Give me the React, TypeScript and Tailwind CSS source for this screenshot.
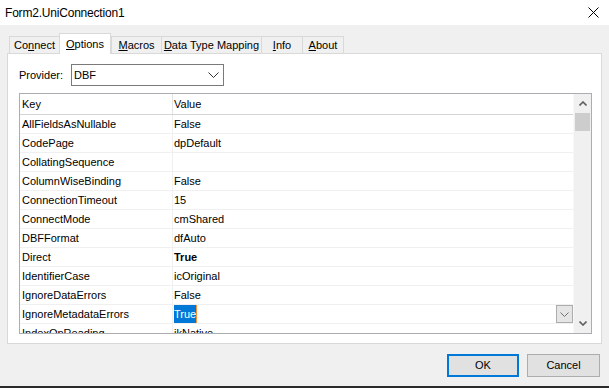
import React from "react";

type Row = { key: string; value: string; bold?: boolean; editing?: boolean };

const rows: Row[] = [
  { key: "AllFieldsAsNullable", value: "False" },
  { key: "CodePage", value: "dpDefault" },
  { key: "CollatingSequence", value: "" },
  { key: "ColumnWiseBinding", value: "False" },
  { key: "ConnectionTimeout", value: "15" },
  { key: "ConnectMode", value: "cmShared" },
  { key: "DBFFormat", value: "dfAuto" },
  { key: "Direct", value: "True", bold: true },
  { key: "IdentifierCase", value: "icOriginal" },
  { key: "IgnoreDataErrors", value: "False" },
  { key: "IgnoreMetadataErrors", value: "True", editing: true },
  { key: "IndexOnReading", value: "ikNative" },
];

// label split around the mnemonic letter
const tabs = [
  { pre: "Co", u: "n", post: "nect", w: "w-[50px]" },
  { pre: "", u: "O", post: "ptions", w: "w-[52px]", active: true },
  { pre: "", u: "M", post: "acros", w: "w-[50px]" },
  { pre: "", u: "D", post: "ata Type Mapping", w: "w-[100px]" },
  { pre: "", u: "I", post: "nfo", w: "w-[41px]" },
  { pre: "", u: "A", post: "bout", w: "w-[42px]" },
];

function Chevron({ className = "", small }: { className?: string; small?: boolean }) {
  if (small) {
    return (
      <svg width="9" height="5" viewBox="0 0 9 5" className={className}>
        <path d="M0.5 0.5 L4.5 4.5 L8.5 0.5" fill="none" stroke="currentColor" strokeWidth="1" />
      </svg>
    );
  }
  return (
    <svg width="11" height="6" viewBox="0 0 11 6" className={className}>
      <path d="M0.5 0.5 L5.5 5.5 L10.5 0.5" fill="none" stroke="currentColor" strokeWidth="1" />
    </svg>
  );
}

function ScrollArrow({ up }: { up?: boolean }) {
  return (
    <svg width="8" height="5" viewBox="0 0 8 5" className="text-[#606060]">
      <path
        d={up ? "M0.5 4.5 L4 1 L7.5 4.5" : "M0.5 0.5 L4 4 L7.5 0.5"}
        fill="none"
        stroke="currentColor"
        strokeWidth="1.6"
      />
    </svg>
  );
}

export default function App() {
  return (
    <div className="w-[609px] h-[388px] bg-[#f0f0f0] flex flex-col overflow-hidden font-['Liberation_Sans',Arial,sans-serif] text-[11px] text-black">
      {/* title bar */}
      <div className="h-[25px] bg-white flex items-center justify-between pl-[5px] pr-[10px]">
        <span className="text-[12px] tracking-[-0.2px]">Form2.UniConnection1</span>
        <svg width="11" height="11" viewBox="0 0 11 11">
          <path d="M0.5 0.5 L10.5 10.5 M10.5 0.5 L0.5 10.5" stroke="#000" strokeWidth="1" />
        </svg>
      </div>

      {/* tabs */}
      <div className="pt-[8px] px-[7px]">
        <div className="flex items-end h-[20px] pl-[2px]">
          {tabs.map((t, i) => (
            <div
              key={i}
              className={
                t.active
                  ? `${t.w} h-[21px] bg-white border border-b-0 border-[#d9d9d9] flex items-start justify-center pt-[2px] relative z-10 -mb-px`
                  : `${t.w} h-[17px] border-t border-l border-[#d9d9d9] ${i === tabs.length - 1 ? "border-r" : ""} flex items-center justify-center`
              }
            >
              <span>
                {t.pre}
                <span className="underline underline-offset-1">{t.u}</span>
                {t.post}
              </span>
            </div>
          ))}
        </div>

        {/* page */}
        <div className="h-[291px] bg-white border border-[#d9d9d9] flex flex-col pl-[11px] pr-[9px]">
          <div className="flex items-center mt-[10px] h-[22px]">
            <span className="w-[52px]">Provider:</span>
            <div className="w-[153px] h-[22px] border border-[#7a7a7a] flex items-center justify-between pl-[2px] pr-[4px]">
              <span>DBF</span>
              <Chevron className="text-[#333]" />
            </div>
          </div>

          {/* grid */}
          <div className="mt-[7px] h-[241px] border border-[#abadb3] flex overflow-hidden">
            <div className="flex-1 flex flex-col overflow-hidden">
              <div className="h-[21px] shrink-0 flex border-b border-[#d5d5d5]">
                <div className="w-[153px] border-r border-[#e3e3e3] pl-[2px] flex items-center">Key</div>
                <div className="flex-1 pl-[1px] flex items-center">Value</div>
              </div>
              {rows.map((r) => (
                <div key={r.key} className="h-[19px] shrink-0 flex border-b border-[#f0f0f0]">
                  <div className="w-[153px] border-r border-[#f0f0f0] pl-[2px] flex items-center">{r.key}</div>
                  <div className="flex-1 pl-[1px] flex items-center justify-between">
                    {r.editing ? (
                      <>
                        <span className="h-[18px] bg-[#0078d7] text-white flex items-center border-r border-[#ff9030]">
                          {r.value}
                        </span>
                        <div className="w-[17px] h-[18px] bg-[#e5e5e5] border border-[#adadad] flex items-center justify-center">
                          <Chevron small className="text-[#707070]" />
                        </div>
                      </>
                    ) : (
                      <span className={r.bold ? "font-bold" : ""}>{r.value}</span>
                    )}
                  </div>
                </div>
              ))}
            </div>
            {/* scrollbar */}
            <div className="w-[18px] bg-[#f0f0f0] border-l border-[#f8f8f8] flex flex-col pl-[1px] pr-[1px]">
              <div className="h-[19px] flex items-center justify-center">
                <ScrollArrow up />
              </div>
              <div className="h-[18px] bg-[#cdcdcd]" />
              <div className="flex-1" />
              <div className="h-[19px] flex items-center justify-center">
                <ScrollArrow />
              </div>
            </div>
          </div>
        </div>
      </div>

      {/* buttons */}
      <div className="flex justify-end gap-[8px] pr-[9px] mt-[10px]">
        <button className="w-[72px] h-[23px] bg-[#e1e1e1] border-2 border-[#0078d7]">OK</button>
        <button className="w-[73px] h-[23px] bg-[#e1e1e1] border border-[#adadad]">Cancel</button>
      </div>
      <div className="flex-1" />
      <div className="h-[2px] bg-[#2b2b2b]" />
    </div>
  );
}
